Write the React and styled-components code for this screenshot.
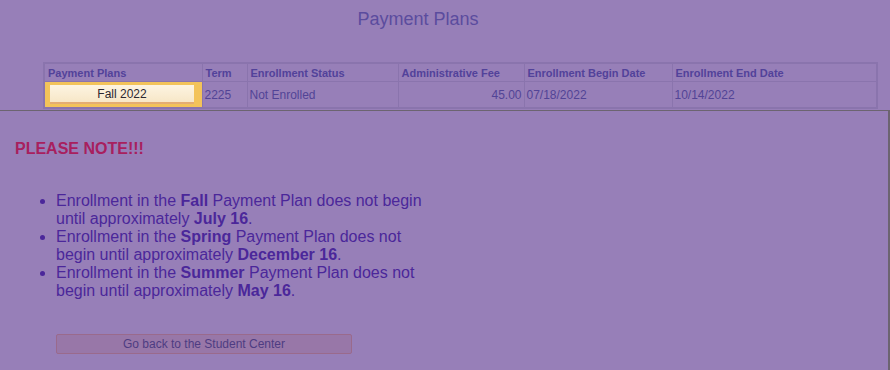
import React from "react";
import styled, { createGlobalStyle } from "styled-components";

const Global = createGlobalStyle`
  html, body { margin: 0; padding: 0; background: #977fb8; }
  body { font-family: "Liberation Sans", Arial, sans-serif; width: 890px; height: 370px; overflow: hidden; }
`;

const Page = styled.div`
  width: 890px;
  height: 370px;
  background: #977fb8;
  display: flex;
  flex-direction: column;
`;

const Title = styled.h1`
  margin: 0;
  width: 836px;
  height: 62px;
  padding-top: 8px;
  box-sizing: border-box;
  text-align: center;
  font-size: 18px;
  font-weight: normal;
  line-height: 22px;
  color: #5b4c9e;
`;

const Grid = styled.table`
  margin-left: 43px;
  width: 833px;
  border-collapse: collapse;
  border: 2px solid #8a74ad;
  table-layout: fixed;
`;

const Th = styled.th`
  height: 17px;
  padding: 0 3px;
  text-align: left;
  font-size: 11px;
  font-weight: bold;
  color: #52429a;
  border: 1px solid #8a74ad;
  white-space: nowrap;
`;

const Td = styled.td`
  height: 25px;
  padding: 0 2px;
  font-size: 12px;
  color: #524496;
  text-align: ${(p) => (p.$right ? "right" : "left")};
  border: 1px solid #8a74ad;
  background: ${(p) => (p.$hl ? "#f3c35a" : "transparent")};
  white-space: nowrap;
`;

const PlanButton = styled.button`
  display: block;
  width: 144px;
  height: 19px;
  margin: 0 auto 0 3px;
  padding: 0;
  border: none;
  border-bottom: 2px solid #e4ad72;
  background: linear-gradient(#fdf4e2, #f7e7c7);
  font-family: "Liberation Sans", Arial, sans-serif;
  font-size: 12px;
  color: #2c2830;
`;

const Modal = styled.section`
  margin-top: 1px;
  flex: 1;
  width: 890px;
  box-sizing: border-box;
  border-top: 1px solid #6c6470;
  border-right: 2px solid #6c6470;
  padding: 29px 0 0 15px;
`;

const Notice = styled.h2`
  margin: 0;
  font-size: 16px;
  font-weight: bold;
  line-height: 18px;
  color: #a8205e;
`;

const List = styled.ul`
  margin: 34px 0 0 0;
  padding-left: 41px;
  width: 376px;
  font-size: 16px;
  line-height: 18px;
  color: #4b279a;
  b { font-weight: bold; }
`;

const Back = styled.button`
  display: block;
  margin: 34px 0 0 41px;
  width: 296px;
  height: 20px;
  padding: 0;
  background: #9877a8;
  border: 1px solid #9a6a8c;
  border-radius: 2px;
  font-family: "Liberation Sans", Arial, sans-serif;
  font-size: 12px;
  color: #4e3c82;
`;

const cols = [158, 45, 151, 126, 148, 205];

export default function App() {
  return (
    <Page>
      <Global />
      <Title>Payment Plans</Title>
      <Grid>
        <colgroup>
          {cols.map((w, i) => (
            <col key={i} style={{ width: w }} />
          ))}
        </colgroup>
        <thead>
          <tr>
            <Th>Payment Plans</Th>
            <Th>Term</Th>
            <Th>Enrollment Status</Th>
            <Th>Administrative Fee</Th>
            <Th>Enrollment Begin Date</Th>
            <Th>Enrollment End Date</Th>
          </tr>
        </thead>
        <tbody>
          <tr>
            <Td $hl>
              <PlanButton>Fall 2022</PlanButton>
            </Td>
            <Td>2225</Td>
            <Td>Not Enrolled</Td>
            <Td $right>45.00</Td>
            <Td>07/18/2022</Td>
            <Td>10/14/2022</Td>
          </tr>
        </tbody>
      </Grid>
      <Modal>
        <Notice>PLEASE NOTE!!!</Notice>
        <List>
          <li>
            Enrollment in the <b>Fall</b> Payment Plan does not begin until approximately <b>July 16</b>.
          </li>
          <li>
            Enrollment in the <b>Spring</b> Payment Plan does not begin until approximately <b>December 16</b>.
          </li>
          <li>
            Enrollment in the <b>Summer</b> Payment Plan does not begin until approximately <b>May 16</b>.
          </li>
        </List>
        <Back>Go back to the Student Center</Back>
      </Modal>
    </Page>
  );
}
